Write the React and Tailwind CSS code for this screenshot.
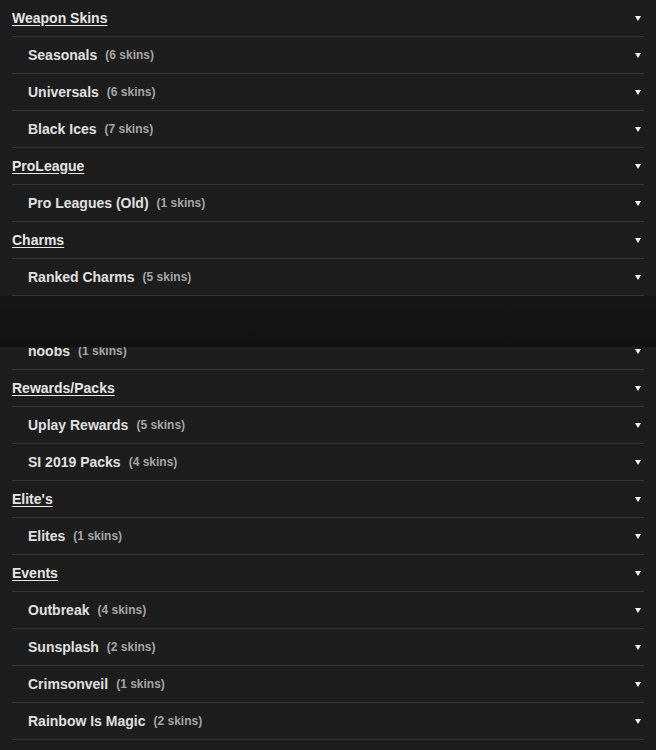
const groups = [
  {
    title: 'Weapon Skins',
    items: [
      ['Seasonals', 6],
      ['Universals', 6],
      ['Black Ices', 7],
    ],
  },
  { title: 'ProLeague', items: [['Pro Leagues (Old)', 1]] },
  {
    title: 'Charms',
    items: [
      ['Ranked Charms', 5],
      ['Season Charms', 8],
      ['noobs', 1],
    ],
  },
  {
    title: 'Rewards/Packs',
    items: [
      ['Uplay Rewards', 5],
      ['SI 2019 Packs', 4],
    ],
  },
  { title: "Elite's", items: [['Elites', 1]] },
  {
    title: 'Events',
    items: [
      ['Outbreak', 4],
      ['Sunsplash', 2],
      ['Crimsonveil', 1],
      ['Rainbow Is Magic', 2],
    ],
  },
]

const Arrow = () => (
  <span className="ml-auto mr-[3px] w-0 h-0 border-l-[3px] border-r-[3px] border-t-[5px] border-l-transparent border-r-transparent border-t-[#f2f2f2]" />
)

const Row = ({ children }) => (
  <div className="h-[37px] flex items-center border-b border-[#363636]">
    {children}
    <Arrow />
  </div>
)

export default function App() {
  return (
    <div
      className="relative min-h-screen bg-[#1d1d1d] px-3 overflow-hidden"
      style={{ fontFamily: '"Liberation Sans", Arial, sans-serif' }}
    >
      {groups.map((g) => (
        <div key={g.title}>
          <Row>
            <span className="text-[14px] font-bold text-[#e6e6e6] underline underline-offset-2">
              {g.title}
            </span>
          </Row>
          {g.items.map(([name, n]) => (
            <Row key={name}>
              <span className="pl-4 text-[14px] font-bold text-[#e0e0e0]">{name}</span>
              <span className="ml-2 text-[12px] font-bold text-[#a6a6a6]">({n} skins)</span>
            </Row>
          ))}
        </div>
      ))}

      {/* sticky bar covering part of the list */}
      <div className="absolute left-0 right-0 top-[296px] h-[51px] bg-gradient-to-b from-[#161616] to-[#111111]" />
    </div>
  )
}
